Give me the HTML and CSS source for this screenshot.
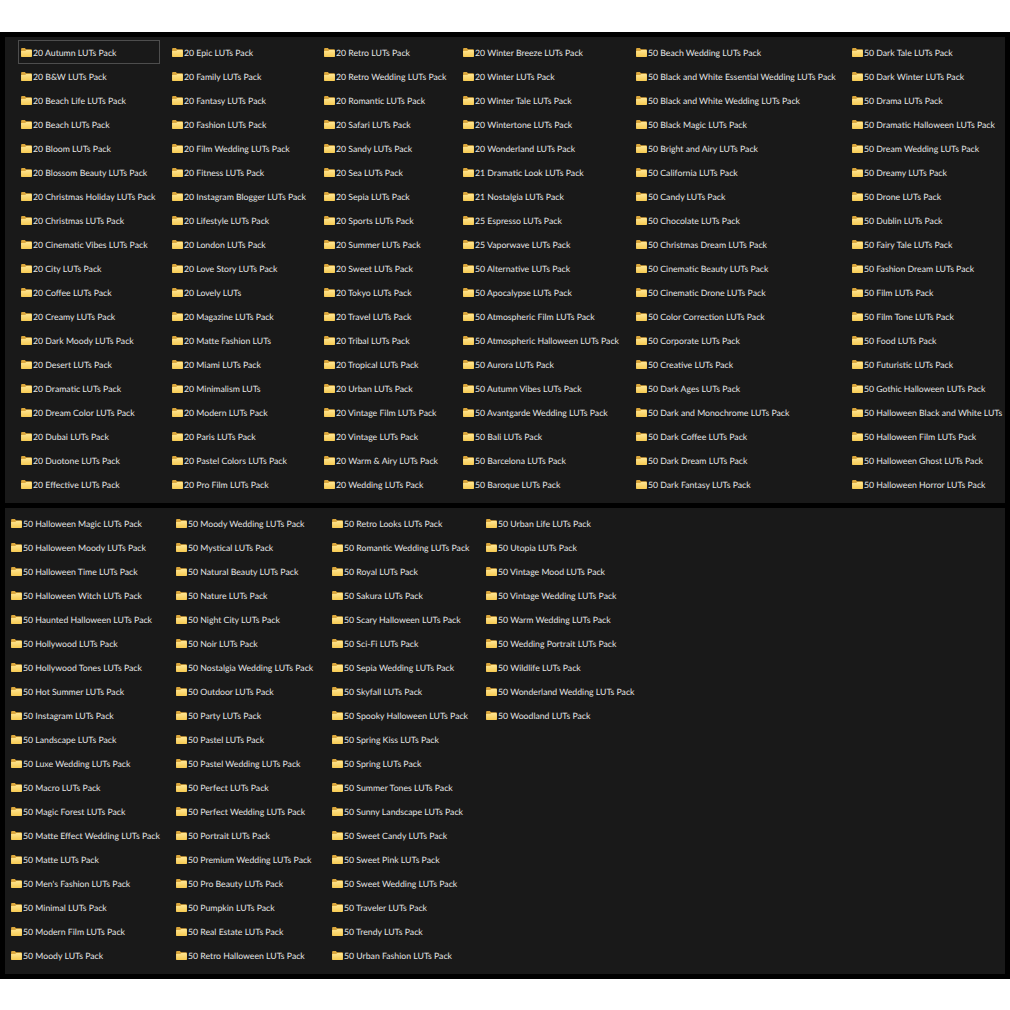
FILE: index.html
```html
<!DOCTYPE html>
<html lang="en">
<head>
<meta charset="utf-8">
<title>LUTs Packs</title>
<link rel="stylesheet" href="styles.css">
</head>
<body>
<svg class="defs" width="0" height="0" aria-hidden="true">
<defs>
<linearGradient id="fg" x1="0" y1="0" x2="0" y2="1"><stop offset="0" stop-color="#ffe693"/><stop offset="1" stop-color="#f6ca52"/></linearGradient>
<symbol id="f" viewBox="0 0 12 10">
<path d="M0 1.2C0 .5.5 0 1.2 0h3l1.2 1.3H11c.6 0 1 .4 1 1V9c0 .6-.4 1-1 1H1c-.6 0-1-.4-1-1z" fill="#dba73c"/>
<path d="M0 3.2 4.6 3.2 5.8 2.2H11c.6 0 1 .4 1 1V9c0 .6-.4 1-1 1H1c-.6 0-1-.4-1-1z" fill="url(#fg)"/>
</symbol>
</defs>
</svg>
<main class="screen">
<section class="panel panel-top">
<div class="item selected"><svg class="folder"><use href="#f"/></svg><span>20 Autumn LUTs Pack</span></div>
<div class="item"><svg class="folder"><use href="#f"/></svg><span>20 B&amp;W LUTs Pack</span></div>
<div class="item"><svg class="folder"><use href="#f"/></svg><span>20 Beach Life LUTs Pack</span></div>
<div class="item"><svg class="folder"><use href="#f"/></svg><span>20 Beach LUTs Pack</span></div>
<div class="item"><svg class="folder"><use href="#f"/></svg><span>20 Bloom LUTs Pack</span></div>
<div class="item"><svg class="folder"><use href="#f"/></svg><span>20 Blossom Beauty LUTs Pack</span></div>
<div class="item"><svg class="folder"><use href="#f"/></svg><span>20 Christmas Holiday LUTs Pack</span></div>
<div class="item"><svg class="folder"><use href="#f"/></svg><span>20 Christmas LUTs Pack</span></div>
<div class="item"><svg class="folder"><use href="#f"/></svg><span>20 Cinematic Vibes LUTs Pack</span></div>
<div class="item"><svg class="folder"><use href="#f"/></svg><span>20 City LUTs Pack</span></div>
<div class="item"><svg class="folder"><use href="#f"/></svg><span>20 Coffee LUTs Pack</span></div>
<div class="item"><svg class="folder"><use href="#f"/></svg><span>20 Creamy LUTs Pack</span></div>
<div class="item"><svg class="folder"><use href="#f"/></svg><span>20 Dark Moody LUTs Pack</span></div>
<div class="item"><svg class="folder"><use href="#f"/></svg><span>20 Desert LUTs Pack</span></div>
<div class="item"><svg class="folder"><use href="#f"/></svg><span>20 Dramatic LUTs Pack</span></div>
<div class="item"><svg class="folder"><use href="#f"/></svg><span>20 Dream Color LUTs Pack</span></div>
<div class="item"><svg class="folder"><use href="#f"/></svg><span>20 Dubai LUTs Pack</span></div>
<div class="item"><svg class="folder"><use href="#f"/></svg><span>20 Duotone LUTs Pack</span></div>
<div class="item"><svg class="folder"><use href="#f"/></svg><span>20 Effective LUTs Pack</span></div>

<div class="item"><svg class="folder"><use href="#f"/></svg><span>20 Epic LUTs Pack</span></div>
<div class="item"><svg class="folder"><use href="#f"/></svg><span>20 Family LUTs Pack</span></div>
<div class="item"><svg class="folder"><use href="#f"/></svg><span>20 Fantasy LUTs Pack</span></div>
<div class="item"><svg class="folder"><use href="#f"/></svg><span>20 Fashion LUTs Pack</span></div>
<div class="item"><svg class="folder"><use href="#f"/></svg><span>20 Film Wedding LUTs Pack</span></div>
<div class="item"><svg class="folder"><use href="#f"/></svg><span>20 Fitness LUTs Pack</span></div>
<div class="item"><svg class="folder"><use href="#f"/></svg><span>20 Instagram Blogger LUTs Pack</span></div>
<div class="item"><svg class="folder"><use href="#f"/></svg><span>20 Lifestyle LUTs Pack</span></div>
<div class="item"><svg class="folder"><use href="#f"/></svg><span>20 London LUTs Pack</span></div>
<div class="item"><svg class="folder"><use href="#f"/></svg><span>20 Love Story LUTs Pack</span></div>
<div class="item"><svg class="folder"><use href="#f"/></svg><span>20 Lovely LUTs</span></div>
<div class="item"><svg class="folder"><use href="#f"/></svg><span>20 Magazine LUTs Pack</span></div>
<div class="item"><svg class="folder"><use href="#f"/></svg><span>20 Matte Fashion LUTs</span></div>
<div class="item"><svg class="folder"><use href="#f"/></svg><span>20 Miami LUTs Pack</span></div>
<div class="item"><svg class="folder"><use href="#f"/></svg><span>20 Minimalism LUTs</span></div>
<div class="item"><svg class="folder"><use href="#f"/></svg><span>20 Modern LUTs Pack</span></div>
<div class="item"><svg class="folder"><use href="#f"/></svg><span>20 Paris LUTs Pack</span></div>
<div class="item"><svg class="folder"><use href="#f"/></svg><span>20 Pastel Colors LUTs Pack</span></div>
<div class="item"><svg class="folder"><use href="#f"/></svg><span>20 Pro Film LUTs Pack</span></div>

<div class="item"><svg class="folder"><use href="#f"/></svg><span>20 Retro LUTs Pack</span></div>
<div class="item"><svg class="folder"><use href="#f"/></svg><span>20 Retro Wedding LUTs Pack</span></div>
<div class="item"><svg class="folder"><use href="#f"/></svg><span>20 Romantic LUTs Pack</span></div>
<div class="item"><svg class="folder"><use href="#f"/></svg><span>20 Safari LUTs Pack</span></div>
<div class="item"><svg class="folder"><use href="#f"/></svg><span>20 Sandy LUTs Pack</span></div>
<div class="item"><svg class="folder"><use href="#f"/></svg><span>20 Sea LUTs Pack</span></div>
<div class="item"><svg class="folder"><use href="#f"/></svg><span>20 Sepia LUTs Pack</span></div>
<div class="item"><svg class="folder"><use href="#f"/></svg><span>20 Sports LUTs Pack</span></div>
<div class="item"><svg class="folder"><use href="#f"/></svg><span>20 Summer LUTs Pack</span></div>
<div class="item"><svg class="folder"><use href="#f"/></svg><span>20 Sweet LUTs Pack</span></div>
<div class="item"><svg class="folder"><use href="#f"/></svg><span>20 Tokyo LUTs Pack</span></div>
<div class="item"><svg class="folder"><use href="#f"/></svg><span>20 Travel LUTs Pack</span></div>
<div class="item"><svg class="folder"><use href="#f"/></svg><span>20 Tribal LUTs Pack</span></div>
<div class="item"><svg class="folder"><use href="#f"/></svg><span>20 Tropical LUTs Pack</span></div>
<div class="item"><svg class="folder"><use href="#f"/></svg><span>20 Urban LUTs Pack</span></div>
<div class="item"><svg class="folder"><use href="#f"/></svg><span>20 Vintage Film LUTs Pack</span></div>
<div class="item"><svg class="folder"><use href="#f"/></svg><span>20 Vintage LUTs Pack</span></div>
<div class="item"><svg class="folder"><use href="#f"/></svg><span>20 Warm &amp; Airy LUTs Pack</span></div>
<div class="item"><svg class="folder"><use href="#f"/></svg><span>20 Wedding LUTs Pack</span></div>

<div class="item"><svg class="folder"><use href="#f"/></svg><span>20 Winter Breeze LUTs Pack</span></div>
<div class="item"><svg class="folder"><use href="#f"/></svg><span>20 Winter LUTs Pack</span></div>
<div class="item"><svg class="folder"><use href="#f"/></svg><span>20 Winter Tale LUTs Pack</span></div>
<div class="item"><svg class="folder"><use href="#f"/></svg><span>20 Wintertone LUTs Pack</span></div>
<div class="item"><svg class="folder"><use href="#f"/></svg><span>20 Wonderland LUTs Pack</span></div>
<div class="item"><svg class="folder"><use href="#f"/></svg><span>21 Dramatic Look LUTs Pack</span></div>
<div class="item"><svg class="folder"><use href="#f"/></svg><span>21 Nostalgia LUTs Pack</span></div>
<div class="item"><svg class="folder"><use href="#f"/></svg><span>25 Espresso LUTs Pack</span></div>
<div class="item"><svg class="folder"><use href="#f"/></svg><span>25 Vaporwave LUTs Pack</span></div>
<div class="item"><svg class="folder"><use href="#f"/></svg><span>50 Alternative LUTs Pack</span></div>
<div class="item"><svg class="folder"><use href="#f"/></svg><span>50 Apocalypse LUTs Pack</span></div>
<div class="item"><svg class="folder"><use href="#f"/></svg><span>50 Atmospheric Film LUTs Pack</span></div>
<div class="item"><svg class="folder"><use href="#f"/></svg><span>50 Atmospheric Halloween LUTs Pack</span></div>
<div class="item"><svg class="folder"><use href="#f"/></svg><span>50 Aurora LUTs Pack</span></div>
<div class="item"><svg class="folder"><use href="#f"/></svg><span>50 Autumn Vibes LUTs Pack</span></div>
<div class="item"><svg class="folder"><use href="#f"/></svg><span>50 Avantgarde Wedding LUTs Pack</span></div>
<div class="item"><svg class="folder"><use href="#f"/></svg><span>50 Bali LUTs Pack</span></div>
<div class="item"><svg class="folder"><use href="#f"/></svg><span>50 Barcelona LUTs Pack</span></div>
<div class="item"><svg class="folder"><use href="#f"/></svg><span>50 Baroque LUTs Pack</span></div>

<div class="item"><svg class="folder"><use href="#f"/></svg><span>50 Beach Wedding LUTs Pack</span></div>
<div class="item"><svg class="folder"><use href="#f"/></svg><span>50 Black and White Essential Wedding LUTs Pack</span></div>
<div class="item"><svg class="folder"><use href="#f"/></svg><span>50 Black and White Wedding LUTs Pack</span></div>
<div class="item"><svg class="folder"><use href="#f"/></svg><span>50 Black Magic LUTs Pack</span></div>
<div class="item"><svg class="folder"><use href="#f"/></svg><span>50 Bright and Airy LUTs Pack</span></div>
<div class="item"><svg class="folder"><use href="#f"/></svg><span>50 California LUTs Pack</span></div>
<div class="item"><svg class="folder"><use href="#f"/></svg><span>50 Candy LUTs Pack</span></div>
<div class="item"><svg class="folder"><use href="#f"/></svg><span>50 Chocolate LUTs Pack</span></div>
<div class="item"><svg class="folder"><use href="#f"/></svg><span>50 Christmas Dream LUTs Pack</span></div>
<div class="item"><svg class="folder"><use href="#f"/></svg><span>50 Cinematic Beauty LUTs Pack</span></div>
<div class="item"><svg class="folder"><use href="#f"/></svg><span>50 Cinematic Drone LUTs Pack</span></div>
<div class="item"><svg class="folder"><use href="#f"/></svg><span>50 Color Correction LUTs Pack</span></div>
<div class="item"><svg class="folder"><use href="#f"/></svg><span>50 Corporate LUTs Pack</span></div>
<div class="item"><svg class="folder"><use href="#f"/></svg><span>50 Creative LUTs Pack</span></div>
<div class="item"><svg class="folder"><use href="#f"/></svg><span>50 Dark Ages LUTs Pack</span></div>
<div class="item"><svg class="folder"><use href="#f"/></svg><span>50 Dark and Monochrome LUTs Pack</span></div>
<div class="item"><svg class="folder"><use href="#f"/></svg><span>50 Dark Coffee LUTs Pack</span></div>
<div class="item"><svg class="folder"><use href="#f"/></svg><span>50 Dark Dream LUTs Pack</span></div>
<div class="item"><svg class="folder"><use href="#f"/></svg><span>50 Dark Fantasy LUTs Pack</span></div>

<div class="item"><svg class="folder"><use href="#f"/></svg><span>50 Dark Tale LUTs Pack</span></div>
<div class="item"><svg class="folder"><use href="#f"/></svg><span>50 Dark Winter LUTs Pack</span></div>
<div class="item"><svg class="folder"><use href="#f"/></svg><span>50 Drama LUTs Pack</span></div>
<div class="item"><svg class="folder"><use href="#f"/></svg><span>50 Dramatic Halloween LUTs Pack</span></div>
<div class="item"><svg class="folder"><use href="#f"/></svg><span>50 Dream Wedding LUTs Pack</span></div>
<div class="item"><svg class="folder"><use href="#f"/></svg><span>50 Dreamy LUTs Pack</span></div>
<div class="item"><svg class="folder"><use href="#f"/></svg><span>50 Drone LUTs Pack</span></div>
<div class="item"><svg class="folder"><use href="#f"/></svg><span>50 Dublin LUTs Pack</span></div>
<div class="item"><svg class="folder"><use href="#f"/></svg><span>50 Fairy Tale LUTs Pack</span></div>
<div class="item"><svg class="folder"><use href="#f"/></svg><span>50 Fashion Dream LUTs Pack</span></div>
<div class="item"><svg class="folder"><use href="#f"/></svg><span>50 Film LUTs Pack</span></div>
<div class="item"><svg class="folder"><use href="#f"/></svg><span>50 Film Tone LUTs Pack</span></div>
<div class="item"><svg class="folder"><use href="#f"/></svg><span>50 Food LUTs Pack</span></div>
<div class="item"><svg class="folder"><use href="#f"/></svg><span>50 Futuristic LUTs Pack</span></div>
<div class="item"><svg class="folder"><use href="#f"/></svg><span>50 Gothic Halloween LUTs Pack</span></div>
<div class="item"><svg class="folder"><use href="#f"/></svg><span>50 Halloween Black and White LUTs Pack</span></div>
<div class="item"><svg class="folder"><use href="#f"/></svg><span>50 Halloween Film LUTs Pack</span></div>
<div class="item"><svg class="folder"><use href="#f"/></svg><span>50 Halloween Ghost LUTs Pack</span></div>
<div class="item"><svg class="folder"><use href="#f"/></svg><span>50 Halloween Horror LUTs Pack</span></div>
</section>
<section class="panel panel-bottom">
<div class="item"><svg class="folder"><use href="#f"/></svg><span>50 Halloween Magic LUTs Pack</span></div>
<div class="item"><svg class="folder"><use href="#f"/></svg><span>50 Halloween Moody LUTs Pack</span></div>
<div class="item"><svg class="folder"><use href="#f"/></svg><span>50 Halloween Time LUTs Pack</span></div>
<div class="item"><svg class="folder"><use href="#f"/></svg><span>50 Halloween Witch LUTs Pack</span></div>
<div class="item"><svg class="folder"><use href="#f"/></svg><span>50 Haunted Halloween LUTs Pack</span></div>
<div class="item"><svg class="folder"><use href="#f"/></svg><span>50 Hollywood LUTs Pack</span></div>
<div class="item"><svg class="folder"><use href="#f"/></svg><span>50 Hollywood Tones LUTs Pack</span></div>
<div class="item"><svg class="folder"><use href="#f"/></svg><span>50 Hot Summer LUTs Pack</span></div>
<div class="item"><svg class="folder"><use href="#f"/></svg><span>50 Instagram LUTs Pack</span></div>
<div class="item"><svg class="folder"><use href="#f"/></svg><span>50 Landscape LUTs Pack</span></div>
<div class="item"><svg class="folder"><use href="#f"/></svg><span>50 Luxe Wedding LUTs Pack</span></div>
<div class="item"><svg class="folder"><use href="#f"/></svg><span>50 Macro LUTs Pack</span></div>
<div class="item"><svg class="folder"><use href="#f"/></svg><span>50 Magic Forest LUTs Pack</span></div>
<div class="item"><svg class="folder"><use href="#f"/></svg><span>50 Matte Effect Wedding LUTs Pack</span></div>
<div class="item"><svg class="folder"><use href="#f"/></svg><span>50 Matte LUTs Pack</span></div>
<div class="item"><svg class="folder"><use href="#f"/></svg><span>50 Men's Fashion LUTs Pack</span></div>
<div class="item"><svg class="folder"><use href="#f"/></svg><span>50 Minimal LUTs Pack</span></div>
<div class="item"><svg class="folder"><use href="#f"/></svg><span>50 Modern Film LUTs Pack</span></div>
<div class="item"><svg class="folder"><use href="#f"/></svg><span>50 Moody LUTs Pack</span></div>

<div class="item"><svg class="folder"><use href="#f"/></svg><span>50 Moody Wedding LUTs Pack</span></div>
<div class="item"><svg class="folder"><use href="#f"/></svg><span>50 Mystical LUTs Pack</span></div>
<div class="item"><svg class="folder"><use href="#f"/></svg><span>50 Natural Beauty LUTs Pack</span></div>
<div class="item"><svg class="folder"><use href="#f"/></svg><span>50 Nature LUTs Pack</span></div>
<div class="item"><svg class="folder"><use href="#f"/></svg><span>50 Night City LUTs Pack</span></div>
<div class="item"><svg class="folder"><use href="#f"/></svg><span>50 Noir LUTs Pack</span></div>
<div class="item"><svg class="folder"><use href="#f"/></svg><span>50 Nostalgia Wedding LUTs Pack</span></div>
<div class="item"><svg class="folder"><use href="#f"/></svg><span>50 Outdoor LUTs Pack</span></div>
<div class="item"><svg class="folder"><use href="#f"/></svg><span>50 Party LUTs Pack</span></div>
<div class="item"><svg class="folder"><use href="#f"/></svg><span>50 Pastel LUTs Pack</span></div>
<div class="item"><svg class="folder"><use href="#f"/></svg><span>50 Pastel Wedding LUTs Pack</span></div>
<div class="item"><svg class="folder"><use href="#f"/></svg><span>50 Perfect LUTs Pack</span></div>
<div class="item"><svg class="folder"><use href="#f"/></svg><span>50 Perfect Wedding LUTs Pack</span></div>
<div class="item"><svg class="folder"><use href="#f"/></svg><span>50 Portrait LUTs Pack</span></div>
<div class="item"><svg class="folder"><use href="#f"/></svg><span>50 Premium Wedding LUTs Pack</span></div>
<div class="item"><svg class="folder"><use href="#f"/></svg><span>50 Pro Beauty LUTs Pack</span></div>
<div class="item"><svg class="folder"><use href="#f"/></svg><span>50 Pumpkin LUTs Pack</span></div>
<div class="item"><svg class="folder"><use href="#f"/></svg><span>50 Real Estate LUTs Pack</span></div>
<div class="item"><svg class="folder"><use href="#f"/></svg><span>50 Retro Halloween LUTs Pack</span></div>

<div class="item"><svg class="folder"><use href="#f"/></svg><span>50 Retro Looks LUTs Pack</span></div>
<div class="item"><svg class="folder"><use href="#f"/></svg><span>50 Romantic Wedding LUTs Pack</span></div>
<div class="item"><svg class="folder"><use href="#f"/></svg><span>50 Royal LUTs Pack</span></div>
<div class="item"><svg class="folder"><use href="#f"/></svg><span>50 Sakura LUTs Pack</span></div>
<div class="item"><svg class="folder"><use href="#f"/></svg><span>50 Scary Halloween LUTs Pack</span></div>
<div class="item"><svg class="folder"><use href="#f"/></svg><span>50 Sci-Fi LUTs Pack</span></div>
<div class="item"><svg class="folder"><use href="#f"/></svg><span>50 Sepia Wedding LUTs Pack</span></div>
<div class="item"><svg class="folder"><use href="#f"/></svg><span>50 Skyfall LUTs Pack</span></div>
<div class="item"><svg class="folder"><use href="#f"/></svg><span>50 Spooky Halloween LUTs Pack</span></div>
<div class="item"><svg class="folder"><use href="#f"/></svg><span>50 Spring Kiss LUTs Pack</span></div>
<div class="item"><svg class="folder"><use href="#f"/></svg><span>50 Spring LUTs Pack</span></div>
<div class="item"><svg class="folder"><use href="#f"/></svg><span>50 Summer Tones LUTs Pack</span></div>
<div class="item"><svg class="folder"><use href="#f"/></svg><span>50 Sunny Landscape LUTs Pack</span></div>
<div class="item"><svg class="folder"><use href="#f"/></svg><span>50 Sweet Candy LUTs Pack</span></div>
<div class="item"><svg class="folder"><use href="#f"/></svg><span>50 Sweet Pink LUTs Pack</span></div>
<div class="item"><svg class="folder"><use href="#f"/></svg><span>50 Sweet Wedding LUTs Pack</span></div>
<div class="item"><svg class="folder"><use href="#f"/></svg><span>50 Traveler LUTs Pack</span></div>
<div class="item"><svg class="folder"><use href="#f"/></svg><span>50 Trendy LUTs Pack</span></div>
<div class="item"><svg class="folder"><use href="#f"/></svg><span>50 Urban Fashion LUTs Pack</span></div>

<div class="item"><svg class="folder"><use href="#f"/></svg><span>50 Urban Life LUTs Pack</span></div>
<div class="item"><svg class="folder"><use href="#f"/></svg><span>50 Utopia LUTs Pack</span></div>
<div class="item"><svg class="folder"><use href="#f"/></svg><span>50 Vintage Mood LUTs Pack</span></div>
<div class="item"><svg class="folder"><use href="#f"/></svg><span>50 Vintage Wedding LUTs Pack</span></div>
<div class="item"><svg class="folder"><use href="#f"/></svg><span>50 Warm Wedding LUTs Pack</span></div>
<div class="item"><svg class="folder"><use href="#f"/></svg><span>50 Wedding Portrait LUTs Pack</span></div>
<div class="item"><svg class="folder"><use href="#f"/></svg><span>50 Wildlife LUTs Pack</span></div>
<div class="item"><svg class="folder"><use href="#f"/></svg><span>50 Wonderland Wedding LUTs Pack</span></div>
<div class="item"><svg class="folder"><use href="#f"/></svg><span>50 Woodland LUTs Pack</span></div>
</section>
</main>
</body>
</html>
```
FILE: styles.css
```css
* { box-sizing: border-box; }
html, body { margin: 0; background: #fff; }
body { padding-top: 32px; font-family: Lato, "Open Sans", sans-serif; text-rendering: geometricPrecision; }
.defs { position: absolute; }
.screen {
  background: #000;
  padding: 5px;
  height: 947px;
  display: flex;
  flex-direction: column;
  gap: 5px;
}
.panel {
  background: #191919;
  height: 466px;
  padding-top: 3px;
  display: grid;
  grid-auto-flow: column;
  grid-template-rows: repeat(19, 24px);
  overflow: hidden;
}
.panel-top {
  padding-left: 15px;
  padding-right: 2px;
  grid-template-columns: 151px 152px 139px 173px 216px 1fr;
}
.panel-bottom {
  padding-left: 5px;
  grid-template-columns: 165px 156px 154px 200px;
}
.item {
  display: flex;
  align-items: center;
  gap: 1.5px;
  color: #e4e4e4;
  font-size: 8.7px;
  white-space: nowrap;
  min-width: 0;
  overflow: hidden;
}
.selected {
  width: 142px;
  margin-left: -2px;
  padding-left: 1px;
  border: 1px solid #4d4d4d;
}
.folder { width: 11px; height: 9px; margin-left: 0.5px; flex: none; }
```
